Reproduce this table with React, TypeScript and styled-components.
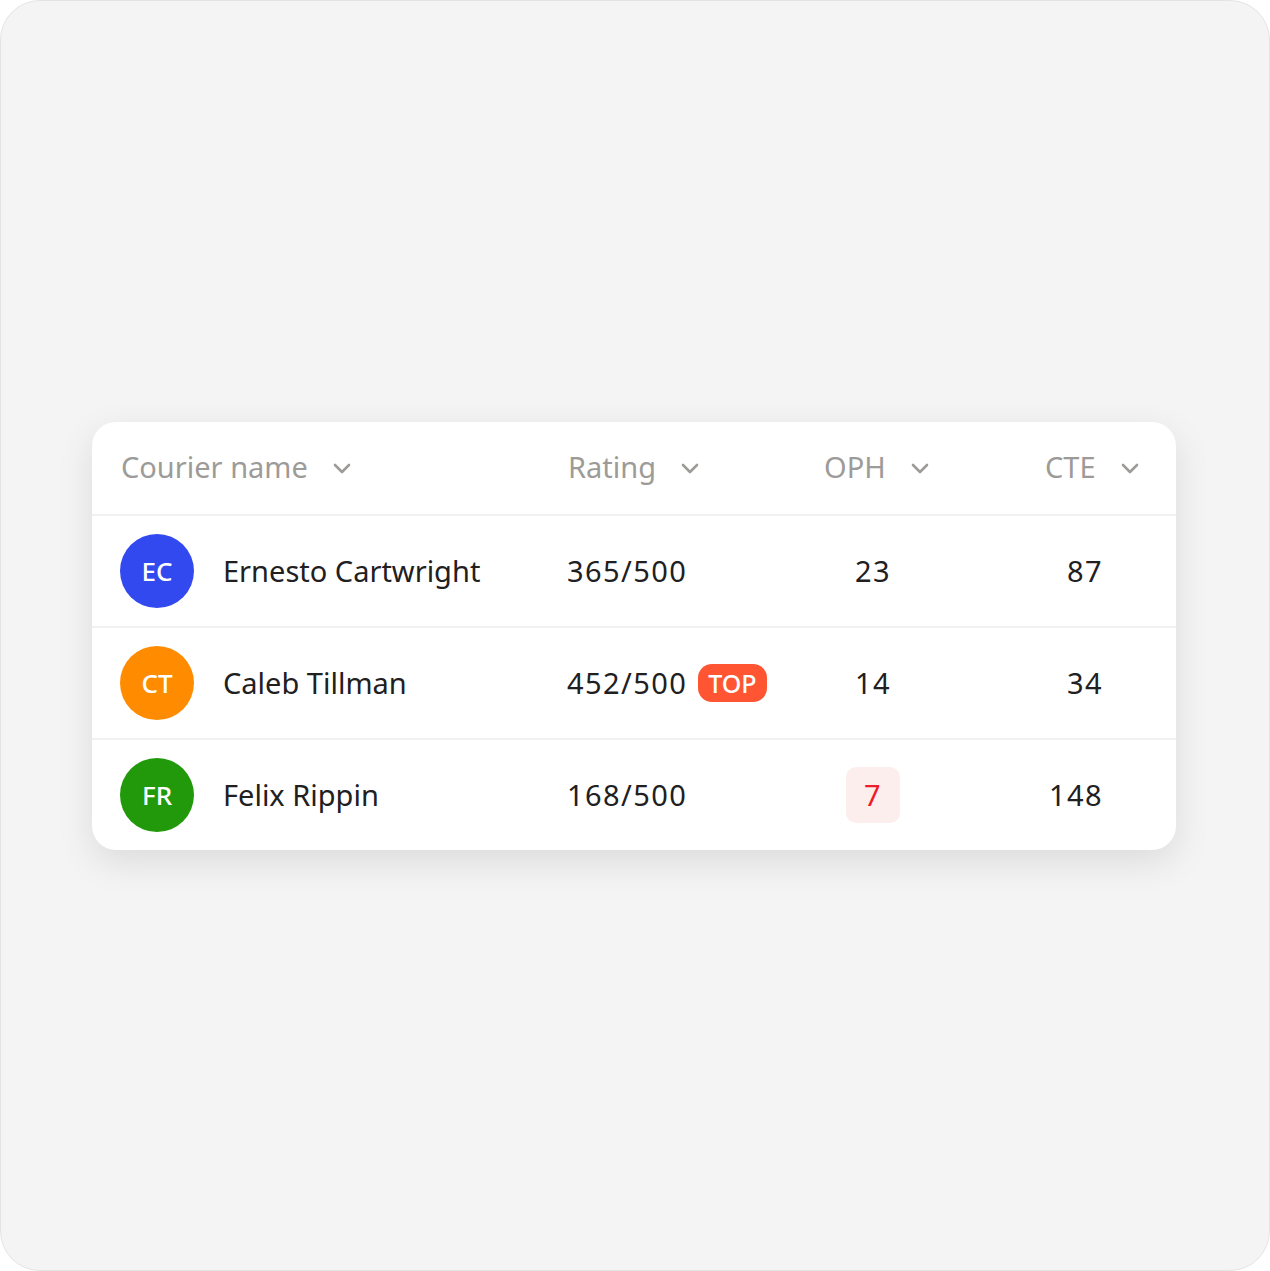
import styled, { createGlobalStyle } from 'styled-components';

const GlobalStyle = createGlobalStyle`
  html, body {
    margin: 0;
    padding: 0;
    background: #ffffff;
  }
  body {
    font-family: 'Noto Sans', 'Liberation Sans', sans-serif;
  }
`;

type Courier = {
  initials: string;
  name: string;
  color: string;
  rating: string;
  top?: boolean;
  oph: number;
  ophLow?: boolean;
  cte: number;
};

const couriers: Courier[] = [
  { initials: 'EC', name: 'Ernesto Cartwright', color: '#3349f0', rating: '365/500', oph: 23, cte: 87 },
  { initials: 'CT', name: 'Caleb Tillman', color: '#ff8c00', rating: '452/500', top: true, oph: 14, cte: 34 },
  { initials: 'FR', name: 'Felix Rippin', color: '#21990b', rating: '168/500', oph: 7, ophLow: true, cte: 148 },
];

function Chevron() {
  return (
    <svg width='18' height='11' viewBox='0 0 18 11' fill='none'>
      <path d='M2 2l7 7 7-7' stroke='#9d9b98' strokeWidth='2.6' strokeLinecap='round' strokeLinejoin='round' />
    </svg>
  );
}

function App() {
  const headers = ['Courier name', 'Rating', 'OPH', 'CTE'];
  return (
    <>
      <GlobalStyle />
      <Frame>
        <Card>
          <HeaderRow>
            {headers.map((h) => (
              <HeaderCell key={h}>
                <span>{h}</span>
                <Chevron />
              </HeaderCell>
            ))}
          </HeaderRow>
          {couriers.map((c) => (
            <Row key={c.initials}>
              <NameCell>
                <Avatar color={c.color}>{c.initials}</Avatar>
                <span>{c.name}</span>
              </NameCell>
              <RatingCell>
                <Num>{c.rating}</Num>
                {c.top && <TopBadge>TOP</TopBadge>}
              </RatingCell>
              <OphCell>
                <OphValue low={c.ophLow}>{c.oph}</OphValue>
              </OphCell>
              <CteCell>{c.cte}</CteCell>
            </Row>
          ))}
        </Card>
      </Frame>
    </>
  );
}
export default App;

const Frame = styled.div`
  box-sizing: border-box;
  width: 1270px;
  height: 1271px;
  background: #f4f4f4;
  border: 1px solid #e4e4e4;
  border-radius: 40px;
  display: flex;
  align-items: center;
  padding-left: 91px;
`;

const Card = styled.div`
  width: 1084px;
  background: #ffffff;
  border-radius: 24px;
  box-shadow: 0 12px 36px rgba(0, 0, 0, 0.1);
  overflow: hidden;
`;

const grid = `
  display: grid;
  grid-template-columns: 447px 256px 221px 1fr;
  align-items: center;
  padding: 0 30px 0 28px;
`;

const HeaderRow = styled.div`
  ${grid}
  height: 92px;
`;

const HeaderCell = styled.div`
  display: flex;
  align-items: center;
  gap: 25px;
  font-size: 29px;
  color: #9d9b98;
  padding-left: 1px;
  margin-top: -3px;

  svg {
    margin-top: 4px;
  }
`;

const Row = styled.div`
  ${grid}
  height: 110px;
  border-top: 2px solid #f2f1ef;
  font-size: 29px;
  color: #21201f;
`;

const NameCell = styled.div`
  display: flex;
  align-items: center;
  gap: 29px;
`;

const Avatar = styled.div<{ color: string }>`
  width: 74px;
  height: 74px;
  border-radius: 50%;
  background: ${(props) => props.color};
  color: #ffffff;
  font-size: 26px;
  font-weight: 500;
  display: flex;
  align-items: center;
  justify-content: center;
`;

const Num = styled.span`
  letter-spacing: 1.4px;
`;

const RatingCell = styled.div`
  display: flex;
  align-items: center;
  gap: 11px;
`;

const TopBadge = styled.span`
  height: 38px;
  padding: 0 10px;
  border-radius: 14px;
  background: #ff5533;
  color: #ffffff;
  font-size: 25px;
  font-weight: 500;
  display: inline-flex;
  align-items: center;
`;

const OphCell = styled.div`
  width: 100px;
  display: flex;
  justify-content: center;
  letter-spacing: 1.4px;
`;

const OphValue = styled.span<{ low?: boolean }>`
  display: inline-flex;
  align-items: center;
  justify-content: center;
  height: 56px;
  min-width: ${(props) => (props.low ? '54px' : 'auto')};
  border-radius: 10px;
  background: ${(props) => (props.low ? '#fdeeee' : 'transparent')};
  color: ${(props) => (props.low ? '#f01c2a' : 'inherit')};
`;

const CteCell = styled.div`
  width: 59px;
  text-align: right;
  letter-spacing: 1.4px;
`;
